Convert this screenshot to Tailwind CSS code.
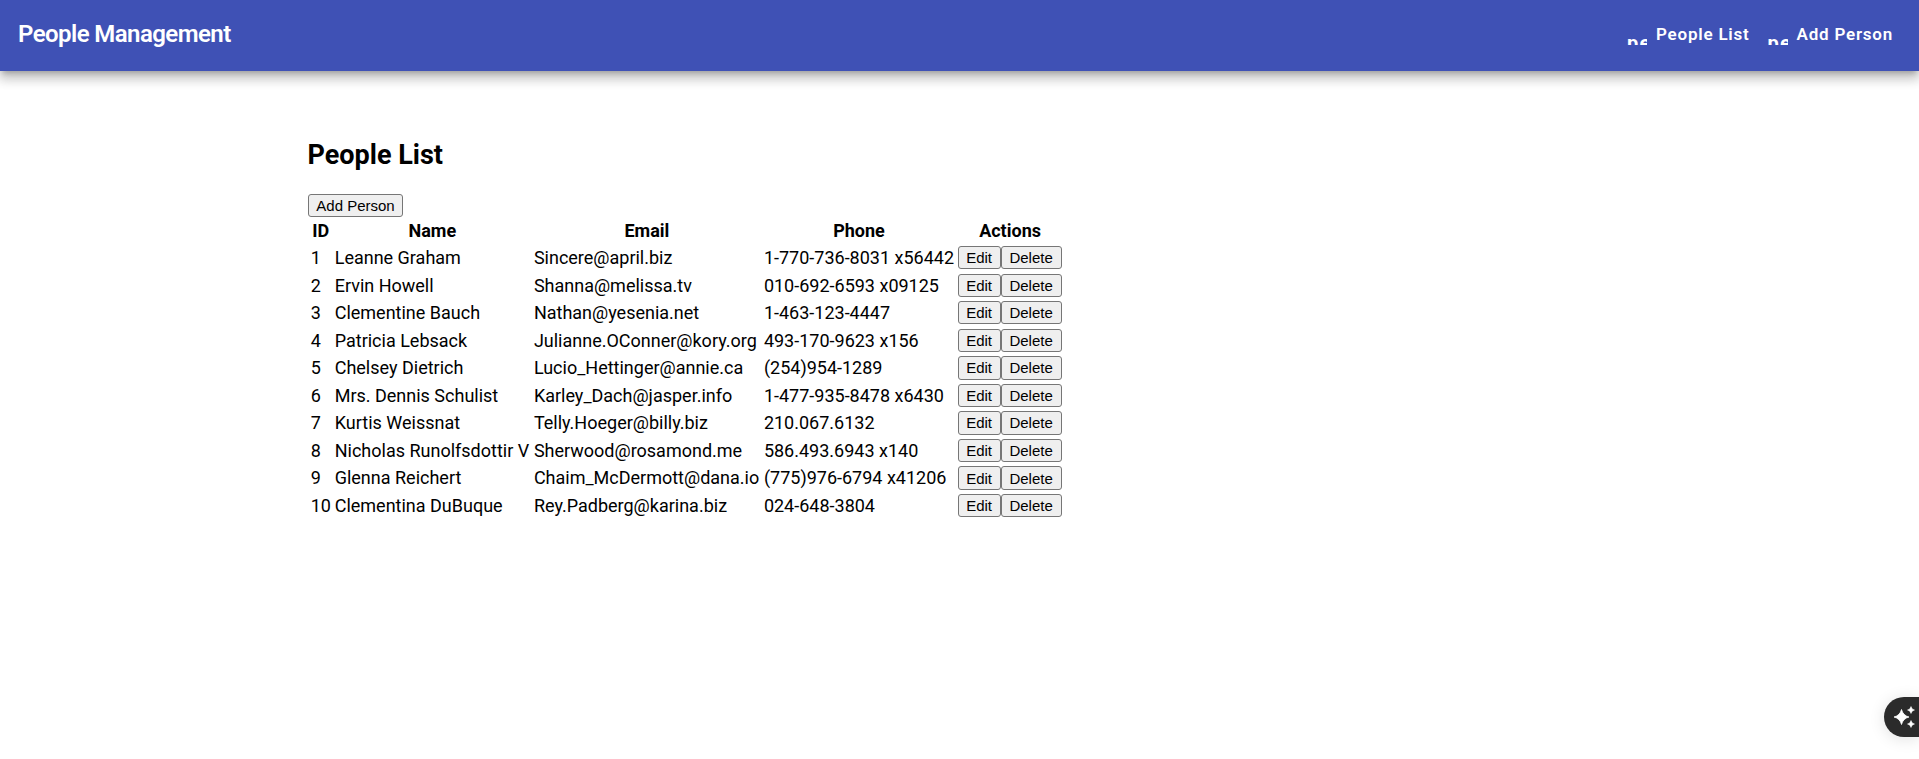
<!DOCTYPE html>
<html lang="en">
<head>
<meta charset="utf-8">
<title>People Management</title>
<script src="https://cdn.jsdelivr.net/npm/@tailwindcss/browser@4"></script>
</head>
<body class="bg-white overflow-hidden font-[Roboto,sans-serif] text-black">
  <header class="relative flex items-center justify-between h-[71px] pl-[18px] pr-[26px] bg-[#3f51b5] text-white shadow-[0_5px_5px_-3px_rgba(0,0,0,0.2),0_8px_10px_1px_rgba(0,0,0,0.14),0_3px_14px_2px_rgba(0,0,0,0.12)]">
    <span class="text-[24px] leading-[28px] font-semibold tracking-[-0.57px] pb-[3px]">People Management</span>
    <nav class="flex gap-[18px] text-[17px] leading-[20px] font-semibold tracking-[0.78px]">
      <a class="flex items-center"><span class="block w-[20px] h-[20px] mr-[9px] mb-px overflow-hidden text-[20px] font-bold leading-[36px] tracking-[1.3px]">people</span><span class="pb-[3px]">People List</span></a>
      <a class="flex items-center"><span class="block w-[20px] h-[20px] mr-[9px] mb-px overflow-hidden text-[20px] font-bold leading-[36px] tracking-[1.3px]">person_add</span><span class="pb-[3px]">Add Person</span></a>
    </nav>
  </header>
  <main class="pl-[308px] pt-[68px]">
    <h2 class="text-[27px] font-bold leading-[32px] mb-[23px] ml-[-0.500px]">People List</h2>
    <button class="block w-[95px] h-[23px] border border-[#767676] rounded-[3px] bg-[#efefef] font-['Liberation_Sans',sans-serif] text-[15px] leading-[21px]">Add Person</button>
    <table class="block ml-[2.700px] text-[18px] leading-[24px] whitespace-nowrap [&_tr]:grid [&_tr]:grid-cols-[20px_195.200px_226px_190.200px_104px] [&_tr]:gap-x-[4px] [&_tr]:h-[27.550px] [&_td:last-child]:flex [&_td:last-child]:ml-[-0.500px] [&_button]:h-[23.300px] [&_button]:border [&_button]:border-[#767676] [&_button]:rounded-[3px] [&_button]:bg-[#efefef] [&_button]:font-['Liberation_Sans',sans-serif] [&_button]:text-[15px] [&_button]:leading-[21px] [&_button:first-child]:w-[43px] [&_button:last-child]:w-[61px]">
      <thead class="block pt-[2px]"><tr><th>ID</th><th>Name</th><th>Email</th><th>Phone</th><th>Actions</th></tr></thead>
      <tbody class="block mt-[-0.500px]">
        <tr><td>1</td><td>Leanne Graham</td><td>Sincere@april.biz</td><td>1-770-736-8031 x56442</td><td><button>Edit</button><button>Delete</button></td></tr>
        <tr><td>2</td><td>Ervin Howell</td><td>Shanna@melissa.tv</td><td>010-692-6593 x09125</td><td><button>Edit</button><button>Delete</button></td></tr>
        <tr><td>3</td><td>Clementine Bauch</td><td>Nathan@yesenia.net</td><td>1-463-123-4447</td><td><button>Edit</button><button>Delete</button></td></tr>
        <tr><td>4</td><td>Patricia Lebsack</td><td>Julianne.OConner@kory.org</td><td>493-170-9623 x156</td><td><button>Edit</button><button>Delete</button></td></tr>
        <tr><td>5</td><td>Chelsey Dietrich</td><td>Lucio_Hettinger@annie.ca</td><td>(254)954-1289</td><td><button>Edit</button><button>Delete</button></td></tr>
        <tr><td>6</td><td>Mrs. Dennis Schulist</td><td>Karley_Dach@jasper.info</td><td>1-477-935-8478 x6430</td><td><button>Edit</button><button>Delete</button></td></tr>
        <tr><td>7</td><td>Kurtis Weissnat</td><td>Telly.Hoeger@billy.biz</td><td>210.067.6132</td><td><button>Edit</button><button>Delete</button></td></tr>
        <tr><td>8</td><td>Nicholas Runolfsdottir V</td><td>Sherwood@rosamond.me</td><td>586.493.6943 x140</td><td><button>Edit</button><button>Delete</button></td></tr>
        <tr><td>9</td><td>Glenna Reichert</td><td>Chaim_McDermott@dana.io</td><td>(775)976-6794 x41206</td><td><button>Edit</button><button>Delete</button></td></tr>
        <tr><td>10</td><td>Clementina DuBuque</td><td>Rey.Padberg@karina.biz</td><td>024-648-3804</td><td><button>Edit</button><button>Delete</button></td></tr>
      </tbody>
    </table>
  </main>
  <div class="fixed right-0 top-[697px] w-[35px] h-[40px] rounded-l-full bg-[#2b2b2b] shadow-[0_2px_16px_rgba(0,0,0,0.12)]">
    <svg class="absolute left-[10px] top-[9px]" width="22" height="22" viewBox="0 0 22 22" fill="#fff">
      <path d="M7.500 3.500 Q9 9.500 15 11 Q9 12.500 7.500 18.500 Q6 12.500 0 11 Q6 9.500 7.500 3.500Z" stroke="#fff" stroke-width=".8"/>
      <path d="M17 .5 Q17.600 3.400 20.500 4 Q17.600 4.600 17 7.500 Q16.400 4.600 13.500 4 Q16.400 3.400 17 .5Z" stroke="#fff" stroke-width=".5"/>
      <path d="M17 14.500 Q17.600 17.400 20.500 18 Q17.600 18.600 17 21.500 Q16.400 18.600 13.500 18 Q16.400 17.400 17 14.500Z" stroke="#fff" stroke-width=".5"/>
    </svg>
  </div>
</body>
</html>
